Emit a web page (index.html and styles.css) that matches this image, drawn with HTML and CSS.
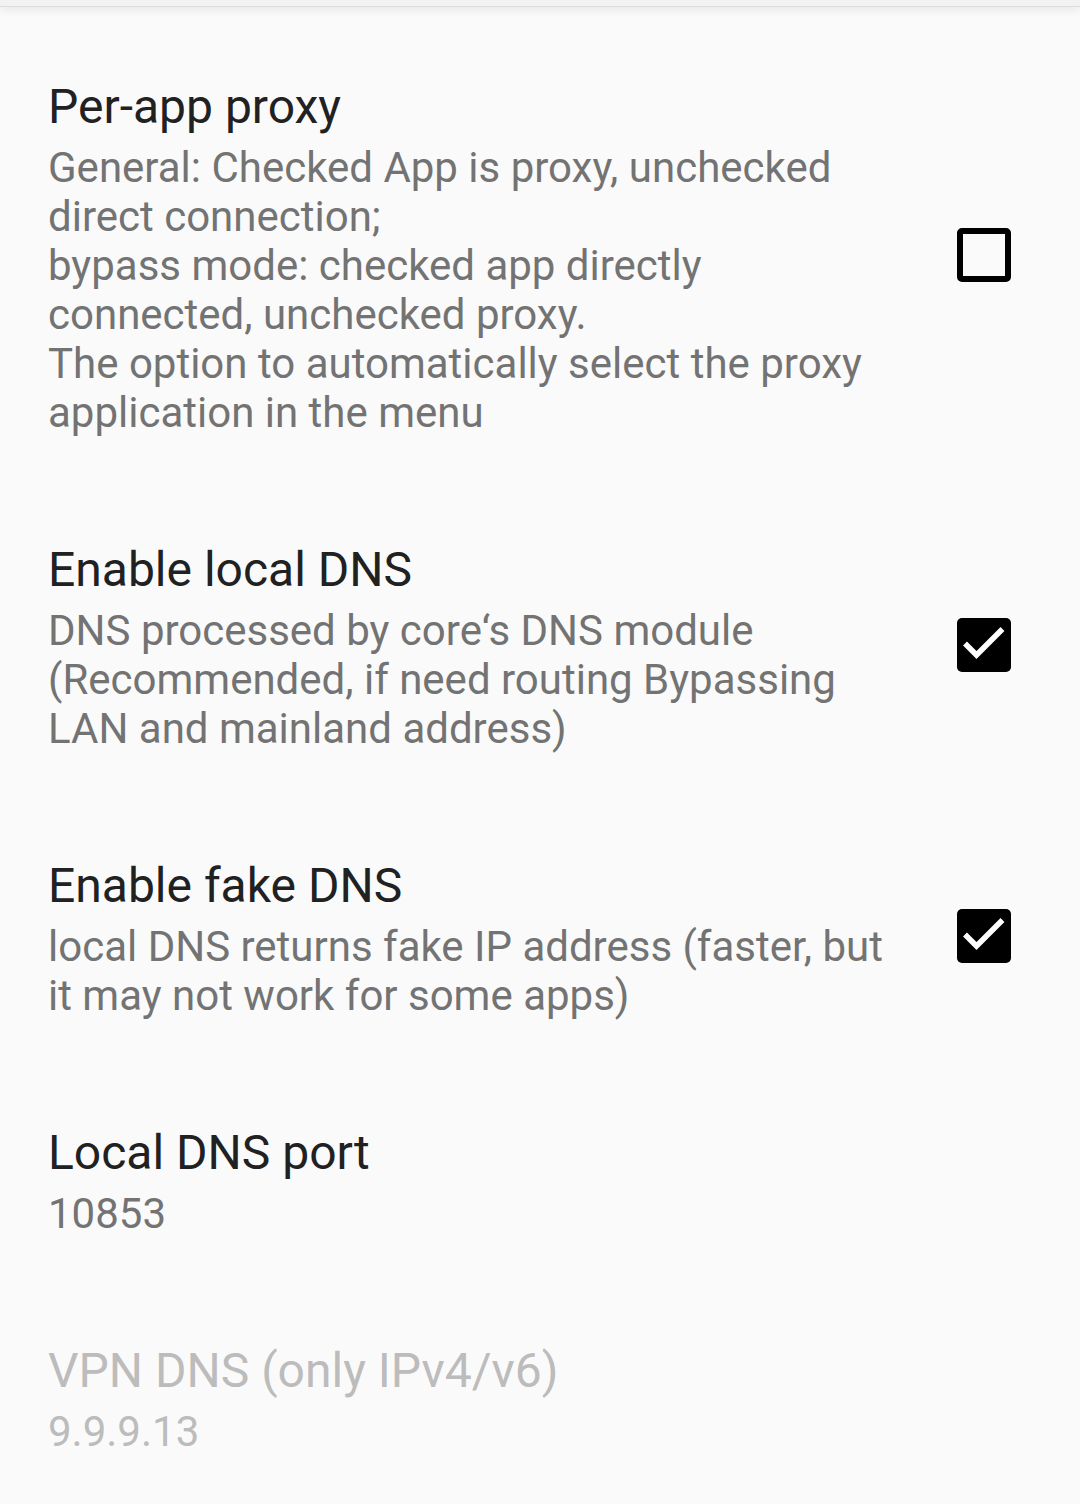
FILE: index.html
```html
<!DOCTYPE html>
<html lang="en">
<head>
<meta charset="utf-8">
<title>Settings</title>
<link rel="stylesheet" href="styles.css">
</head>
<body>
<div class="appbar-edge"></div>
<main class="prefs">
  <section class="pref">
    <div class="pref-text">
      <div class="pref-title">Per-app proxy</div>
      <div class="pref-summary">General: Checked App is proxy, unchecked direct connection;<br>bypass mode: checked app directly connected, unchecked proxy.<br>The option to automatically select the proxy application in the menu</div>
    </div>
    <div class="pref-widget">
      <span class="checkbox"></span>
    </div>
  </section>
  <section class="pref">
    <div class="pref-text">
      <div class="pref-title">Enable local DNS</div>
      <div class="pref-summary">DNS processed by core‘s DNS module (Recommended, if need routing Bypassing LAN and mainland address)</div>
    </div>
    <div class="pref-widget">
      <span class="checkbox checked"><svg viewBox="0 0 54 54" width="54" height="54"><path d="M8 25.5 L19.5 37 L45.5 11" fill="none" stroke="#fff" stroke-width="5.5" stroke-linecap="butt" stroke-linejoin="miter"/></svg></span>
    </div>
  </section>
  <section class="pref">
    <div class="pref-text">
      <div class="pref-title">Enable fake DNS</div>
      <div class="pref-summary">local DNS returns fake IP address (faster, but it may not work for some apps)</div>
    </div>
    <div class="pref-widget">
      <span class="checkbox checked"><svg viewBox="0 0 54 54" width="54" height="54"><path d="M8 25.5 L19.5 37 L45.5 11" fill="none" stroke="#fff" stroke-width="5.5" stroke-linecap="butt" stroke-linejoin="miter"/></svg></span>
    </div>
  </section>
  <section class="pref">
    <div class="pref-text">
      <div class="pref-title">Local DNS port</div>
      <div class="pref-summary">10853</div>
    </div>
  </section>
  <section class="pref disabled">
    <div class="pref-text">
      <div class="pref-title">VPN DNS (only IPv4/v6)</div>
      <div class="pref-summary">9.9.9.13</div>
    </div>
  </section>
</main>
</body>
</html>
```
FILE: styles.css
```css
html, body {
  margin: 0;
  padding: 0;
  background: #fafafa;
}
body {
  font-family: Roboto, "Noto Sans", sans-serif;
  width: 1080px;
  height: 1504px;
  overflow: hidden;
}
.appbar-edge {
  height: 6px;
  background: #f2f2f2;
  border-bottom: 1px solid #dcdcdc;
  box-shadow: 0 2px 10px rgba(0, 0, 0, 0.10);
  position: relative;
  z-index: 1;
}
.prefs {
  display: flex;
  flex-direction: column;
  padding-top: 19px;
}
.pref {
  display: flex;
  align-items: center;
  padding: 53px 69px 52px 48px;
}
.pref-text {
  flex: 1;
  min-width: 0;
  margin-right: 50px;
}
.pref-title {
  font-size: 48px;
  line-height: 56px;
  color: #212121;
  margin-bottom: 8px;
}
.pref-summary {
  font-size: 42px;
  line-height: 49px;
  color: #737373;
}
.pref.disabled .pref-title,
.pref.disabled .pref-summary {
  color: #bcbcbc;
}
.pref-widget {
  display: flex;
  align-items: center;
  margin-bottom: 6px;
}
.checkbox {
  box-sizing: border-box;
  width: 54px;
  height: 54px;
  border: 6px solid #000;
  border-radius: 5px;
  display: block;
}
.checkbox.checked {
  background: #000;
  border: none;
}
.checkbox svg {
  display: block;
}
```
